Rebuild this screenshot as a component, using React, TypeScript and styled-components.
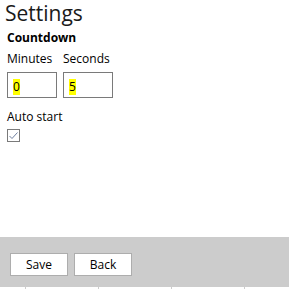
import React from "react";
import styled, { createGlobalStyle } from "styled-components";

const Global = createGlobalStyle`
  html, body { margin: 0; padding: 0; background: #ffffff; }
  body { font-family: "Open Sans", "Noto Sans", sans-serif; color: #000; }
`;

const Page = styled.div`
  width: 289px;
  height: 289px;
  display: flex;
  flex-direction: column;
  overflow: hidden;
`;

const Content = styled.div`
  flex: 1;
  padding: 0 7px;
  display: flex;
  flex-direction: column;
`;

const Title = styled.h1`
  margin: 0 0 0 -2px;
  font-size: 21px;
  font-weight: 400;
  line-height: 26px;
  color: #1a1a1a;
`;

const Section = styled.div`
  font-size: 12px;
  font-weight: 700;
  line-height: 16px;
  margin-top: 4px;
`;

const FieldRow = styled.div`
  display: flex;
  gap: 6px;
  margin-top: 5px;
`;

const Field = styled.div`
  display: flex;
  flex-direction: column;
  width: 50px;
`;

const Label = styled.div`
  font-size: 12px;
  line-height: 16px;
  white-space: nowrap;
`;

const Box = styled.div`
  margin-top: 5px;
  box-sizing: border-box;
  height: 26px;
  border: 1px solid #7a7a7a;
  padding: 6px 0 0 5px;
  display: flex;
  align-items: flex-start;
`;

const Value = styled.span`
  background: #ffff00;
  font-size: 12px;
  line-height: 16px;
  color: #000;
`;

const CheckLabel = styled(Label)`
  margin-top: 11px;
`;

const Check = styled.div`
  margin-top: 4px;
  width: 13px;
  height: 13px;
  box-sizing: border-box;
  border: 1px solid #7a7a7a;
  display: flex;
  align-items: center;
  justify-content: center;
`;

const Footer = styled.div`
  height: 50px;
  background: #cccccc;
  display: flex;
  gap: 6px;
  padding: 16px 10px 0;
  box-sizing: border-box;
`;

const Button = styled.button`
  width: 58px;
  height: 23px;
  background: #ffffff;
  border: 1px solid #adadad;
  font-family: "Open Sans", "Noto Sans", sans-serif;
  font-size: 12px;
  color: #000;
  padding: 0;
`;

const Ticks = styled.div`
  height: 2px;
  display: flex;
  padding-left: 25px;
`;

const Tick = styled.div`
  width: 72px;
  flex: none;
  border-left: 1px solid #cccccc;
`;

export default function App() {
  return (
    <Page>
      <Global />
      <Content>
        <Title>Settings</Title>
        <Section>Countdown</Section>
        <FieldRow>
          <Field>
            <Label>Minutes</Label>
            <Box>
              <Value>0</Value>
            </Box>
          </Field>
          <Field>
            <Label>Seconds</Label>
            <Box>
              <Value>5</Value>
            </Box>
          </Field>
        </FieldRow>
        <CheckLabel>Auto start</CheckLabel>
        <Check>
          <svg width="11" height="11" viewBox="0 0 11 11">
            <polyline points="1.5,6 4,8.5 9.5,2.5" fill="none" stroke="#6f7fa0" strokeWidth="1" />
          </svg>
        </Check>
      </Content>
      <Footer>
        <Button>Save</Button>
        <Button>Back</Button>
      </Footer>
      <Ticks>
        <Tick />
        <Tick />
        <Tick />
        <Tick />
      </Ticks>
    </Page>
  );
}
